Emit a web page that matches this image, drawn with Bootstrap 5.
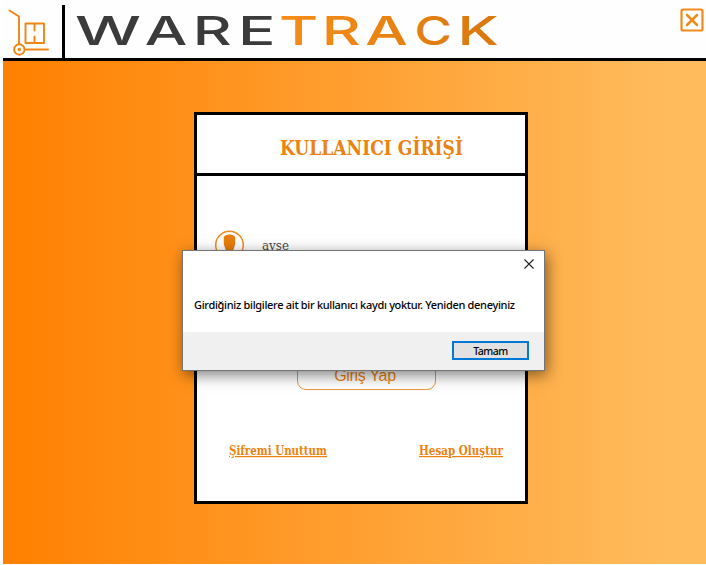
<!DOCTYPE html>
<html lang="tr">
<head>
<meta charset="utf-8">
<meta name="viewport" content="width=device-width, initial-scale=1">
<title>WareTrack</title>
<link href="https://cdn.jsdelivr.net/npm/bootstrap@5.3.0/dist/css/bootstrap.min.css" rel="stylesheet">
<style>
:root { --wt-orange: #ec820f; }
body { width: 706px; height: 565px; padding: 0 0 1px 3px; overflow: hidden; background: #fff; }
.topbar { height: 61px; border-bottom: 3px solid #000; background: #fefefe; }
.brand-icon { width: 59px; height: 58px; }
.brand-rule { width: 3px; height: 53px; background: #000; }
.wordmark { width: 440px; height: 58px; }
.wordmark text { font-family: Inter, "Liberation Sans", sans-serif; font-weight: 500; font-size: 40px; }
.close-app { margin: 8px 2px 0 0; width: 24px; height: 24px; }
.stage { background: linear-gradient(90deg, #ff8000, #ffbb5c 94%, #ffbb5c); }
.login { width: 334px; height: 392px; margin: 51px 0 0 191px; border: 3px solid #000; background: #fff; }
.slab { font-family: "DejaVu Serif Condensed", "DejaVu Serif", serif; font-stretch: condensed; }
.login-head { height: 61px; border-bottom: 3px solid #000; padding: 0 0 0 79px; }
.login-head h1 { font-size: 20.5px; line-height: 61px; }
.login text { fill: var(--wt-orange); }
.login svg { display: block; overflow: visible; }
.user-row { margin: 54px 0 0 18px; height: 31px; }
.user-name { margin-left: 17px; font-size: 12.5px; }
.login .user-name text { fill: #484848; }
.enter-btn { width: 139px; height: 34px; margin: 95px 0 0 100px; padding: 5px 3px 0 0; border: 1px solid #ee953a; border-radius: 9px; color: var(--wt-orange); background: #fff; font: 16px/1 "Liberation Sans", Arial, sans-serif; letter-spacing: -.3px; }
.login-links { margin: 49px 18px 0 28px; font-size: 12px; font-weight: 700; }
.login-links a { text-decoration: none; }
.login-links text { text-decoration: underline; }
.dialog-box { left: 182px; top: 250px; width: 363px; height: 121px; border: 1px solid #747474; background: #fff; box-shadow: 2px 4px 14px rgba(0,0,0,.5); font: 500 11px/16px "Noto Sans", "Open Sans", sans-serif; letter-spacing: -.315px; color: #000; }
.dialog-close { margin: 8px 10px 0 0; }
.dialog-msg { padding: 28px 0 0 11px; white-space: nowrap; }
.dialog-foot { height: 38px; padding: 0 15px 1px 0; background: #f0f0f0; }
.ok-btn { width: 77px; height: 19px; padding: 0; border: 2px solid #0078d7; background: #e1e1e1; font: inherit; font-size: 10.5px; letter-spacing: -.5px; color: #000; }
</style>
</head>
<body class="d-flex flex-column position-relative">
<header class="topbar d-flex align-items-end flex-shrink-0">
  <svg class="brand-icon" viewBox="3 0 59 58" fill="none" stroke="#f08512" stroke-width="1.9" stroke-linecap="round" stroke-linejoin="round">
    <path d="M9.500 10.500 19 16.500V44"/><circle cx="19.300" cy="49.500" r="5.200"/><circle cx="19.300" cy="49.500" r=".8"/>
    <path d="M25.500 49.500H48M25.500 23.500H44V43H25.500ZM34.500 23.500V30.500M34.500 36.500V43"/>
  </svg>
  <div class="brand-rule"></div>
  <svg class="wordmark" viewBox="65 0 440 58" role="img" aria-label="WARETRACK">
    <defs><linearGradient id="amber" gradientUnits="userSpaceOnUse" x1="187" y1="0" x2="332" y2="0"><stop stop-color="#f78d17"/><stop offset="1" stop-color="#d9780e"/></linearGradient></defs>
    <g transform="scale(1.5 1)" fill="#3b3b3b">
      <text y="45.500" x="50" textLength="44" lengthAdjust="spacingAndGlyphs">W</text>
      <text y="45.500" x="96.500 128.500">AR</text>
      <text y="45.500" x="158.700" textLength="25" lengthAdjust="spacingAndGlyphs">E</text>
      <g fill="url(#amber)"><text y="45.500" x="186 214.500 243.500">TRA</text>
      <text y="45.500" x="276.300" textLength="25" lengthAdjust="spacingAndGlyphs">C</text>
      <text y="45.500" x="305">K</text></g>
    </g>
  </svg>
  <svg class="close-app ms-auto align-self-start" viewBox="0 0 24 24" fill="none" stroke="#f08a1c" stroke-linecap="round"><rect x="1.500" y="1.500" width="21" height="21" rx="1.500" stroke-width="2.200"/><path d="M7 7 17 17M17 7 7 17" stroke-width="2.500"/></svg>
</header>
<main class="stage flex-grow-1 d-flex align-items-start">
  <section class="login d-flex flex-column slab">
    <div class="login-head flex-shrink-0"><h1 class="fw-bold m-0 slab"><svg width="194" height="58"><text x="4" y="40" textLength="183" lengthAdjust="spacingAndGlyphs">KULLANICI GİRİŞİ</text></svg></h1></div>
    <div class="user-row d-flex align-items-center">
      <svg width="30" height="31" viewBox="0 0 30 31"><circle cx="14.500" cy="15" r="13.800" fill="none" stroke="#f08a1c" stroke-width="1.500"/><path d="M8.800 7Q10 4.500 14.500 4.500T20.200 7V14L18.700 19 17 23H12L10.300 19 8.800 14Z" fill="#e87e0b"/></svg>
      <span class="user-name"><svg width="32" height="20"><text x="0" y="14" textLength="27" lengthAdjust="spacingAndGlyphs">ayse</text></svg></span>
    </div>
    <button class="enter-btn flex-shrink-0" type="button">Giriş Yap</button>
    <div class="login-links d-flex justify-content-between"><a href="#"><svg width="106" height="24"><text x="4" y="16" textLength="98" lengthAdjust="spacingAndGlyphs">Şifremi Unuttum</text></svg></a><a href="#"><svg width="92" height="24"><text x="4" y="16" textLength="84" lengthAdjust="spacingAndGlyphs">Hesap Oluştur</text></svg></a></div>
  </section>
</main>
<div class="dialog-box position-absolute d-flex flex-column" role="dialog">
  <svg class="dialog-close align-self-end" width="10" height="10" viewBox="0 0 10 10" stroke="#222" stroke-width="1.100"><path d="M.5.5l9 9M9.500.5l-9 9"/></svg>
  <div class="dialog-msg">Girdiğiniz bilgilere ait bir kullanıcı kaydı yoktur. Yeniden deneyiniz</div>
  <div class="dialog-foot d-flex align-items-center justify-content-end mt-auto"><button class="ok-btn d-flex align-items-center justify-content-center" type="button">Tamam</button></div>
</div>
<script src="https://cdn.jsdelivr.net/npm/bootstrap@5.3.0/dist/js/bootstrap.bundle.min.js"></script>
</body>
</html>
